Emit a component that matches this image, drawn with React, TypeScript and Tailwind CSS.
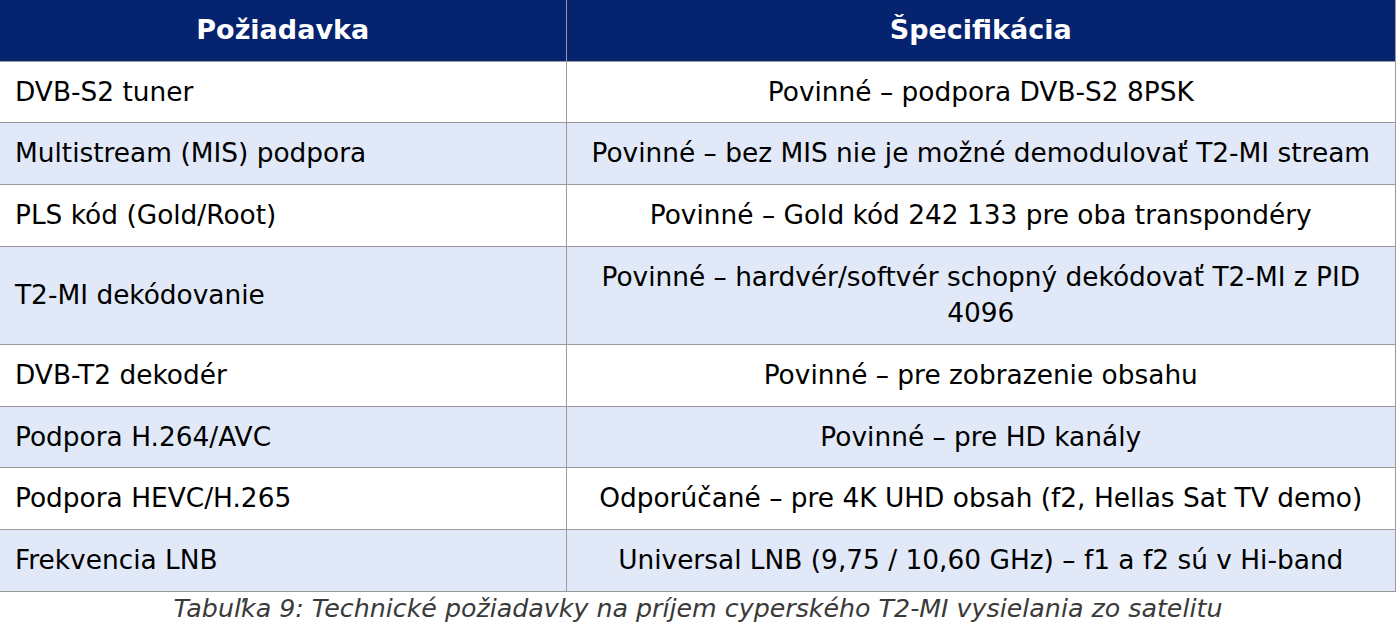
const rows: [string, string][] = [
  ["DVB-S2 tuner", "Povinné – podpora DVB-S2 8PSK"],
  ["Multistream (MIS) podpora", "Povinné – bez MIS nie je možné demodulovať T2-MI stream"],
  ["PLS kód (Gold/Root)", "Povinné – Gold kód 242 133 pre oba transpondéry"],
  ["T2-MI dekódovanie", "Povinné – hardvér/softvér schopný dekódovať T2-MI z PID 4096"],
  ["DVB-T2 dekodér", "Povinné – pre zobrazenie obsahu"],
  ["Podpora H.264/AVC", "Povinné – pre HD kanály"],
  ["Podpora HEVC/H.265", "Odporúčané – pre 4K UHD obsah (f2, Hellas Sat TV demo)"],
  ["Frekvencia LNB", "Universal LNB (9,75 / 10,60 GHz) – f1 a f2 sú v Hi-band"],
];

export default function App() {
  return (
    <div className="w-[1396px] bg-white font-['DejaVu_Sans',sans-serif] text-black">
      <table className="w-full border-collapse table-fixed">
        <colgroup>
          <col className="w-[566px]" />
          <col />
        </colgroup>
        <thead>
          <tr className="bg-[#06236f] text-white">
            <th className="h-[61px] border-r border-b border-[#9a9a9a] text-[27px] font-bold">Požiadavka</th>
            <th className="h-[61px] border-r border-b border-[#9a9a9a] text-[27px] font-bold">Špecifikácia</th>
          </tr>
        </thead>
        <tbody>
          {rows.map(([req, spec], i) => (
            <tr key={req} className={i % 2 === 1 ? "bg-[#e1e9f8]" : "bg-white"}>
              <td className="border-r border-b border-[#9a9a9a] py-3 pl-[15px] pr-3 text-[26.4px] leading-[36.7px]">{req}</td>
              <td className="border-r border-b border-[#9a9a9a] py-3 px-[16px] text-center text-[26.4px] leading-[36.7px]">{spec}</td>
            </tr>
          ))}
        </tbody>
      </table>
      <p className="text-center text-[25.3px] italic text-[#3a3a3a] leading-[34px]">
        Tabuľka 9: Technické požiadavky na príjem cyperského T2-MI vysielania zo satelitu
      </p>
    </div>
  );
}
